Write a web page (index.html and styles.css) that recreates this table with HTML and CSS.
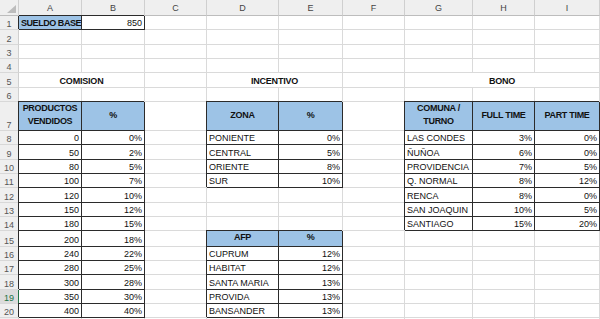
FILE: index.html
```html
<!DOCTYPE html>
<html lang="es">
<head>
    <meta charset="UTF-8">
    <meta name="viewport" content="width=device-width, initial-scale=1.0">
    <title>Remuneraciones</title>
    <link rel="stylesheet" href="styles.css">
</head>
<body>
    <table class="sheet">
        <colgroup>
            <col class="c-rh">
            <col class="c-a">
            <col class="c-b">
            <col class="c-c">
            <col class="c-d">
            <col class="c-e">
            <col class="c-f">
            <col class="c-g">
            <col class="c-h">
            <col class="c-i">
        </colgroup>
        <thead>
            <tr class="colhead">
                <th class="corner"></th>
                <th>A</th><th>B</th><th>C</th><th>D</th><th>E</th><th>F</th><th>G</th><th>H</th><th>I</th>
            </tr>
        </thead>
        <tbody>
            <tr>
                <th>1</th>
                <td class="bx fill b">SUELDO BASE</td><td class="bx num">850</td>
                <td></td><td></td><td></td><td></td><td></td><td></td><td></td>
            </tr>
            <tr><th>2</th><td></td><td></td><td></td><td></td><td></td><td></td><td></td><td></td><td></td></tr>
            <tr><th>3</th><td></td><td></td><td></td><td></td><td></td><td></td><td></td><td></td><td></td></tr>
            <tr><th>4</th><td></td><td></td><td></td><td></td><td></td><td></td><td></td><td></td><td></td></tr>
            <tr>
                <th>5</th>
                <td colspan="2" class="title">COMISION</td><td></td>
                <td colspan="2" class="title">INCENTIVO</td><td></td>
                <td colspan="3" class="title">BONO</td>
            </tr>
            <tr><th>6</th><td></td><td></td><td></td><td></td><td></td><td></td><td></td><td></td><td></td></tr>
            <tr class="tall">
                <th>7</th>
                <td class="bx fill hd">PRODUCTOS<br>VENDIDOS</td><td class="bx fill hd">%</td>
                <td></td>
                <td class="bx fill hd">ZONA</td><td class="bx fill hd">%</td>
                <td></td>
                <td class="bx fill hd">COMUNA /<br>TURNO</td><td class="bx fill hd">FULL TIME</td><td class="bx fill hd">PART TIME</td>
            </tr>
            <tr>
                <th>8</th>
                <td class="bx num">0</td><td class="bx num">0%</td><td></td>
                <td class="bx">PONIENTE</td><td class="bx num">0%</td><td></td>
                <td class="bx">LAS CONDES</td><td class="bx num">3%</td><td class="bx num">0%</td>
            </tr>
            <tr>
                <th>9</th>
                <td class="bx num">50</td><td class="bx num">2%</td><td></td>
                <td class="bx">CENTRAL</td><td class="bx num">5%</td><td></td>
                <td class="bx">ÑUÑOA</td><td class="bx num">6%</td><td class="bx num">0%</td>
            </tr>
            <tr>
                <th>10</th>
                <td class="bx num">80</td><td class="bx num">5%</td><td></td>
                <td class="bx">ORIENTE</td><td class="bx num">8%</td><td></td>
                <td class="bx">PROVIDENCIA</td><td class="bx num">7%</td><td class="bx num">5%</td>
            </tr>
            <tr>
                <th>11</th>
                <td class="bx num">100</td><td class="bx num">7%</td><td></td>
                <td class="bx">SUR</td><td class="bx num">10%</td><td></td>
                <td class="bx">Q. NORMAL</td><td class="bx num">8%</td><td class="bx num">12%</td>
            </tr>
            <tr>
                <th>12</th>
                <td class="bx num">120</td><td class="bx num">10%</td><td></td>
                <td></td><td></td><td></td>
                <td class="bx">RENCA</td><td class="bx num">8%</td><td class="bx num">0%</td>
            </tr>
            <tr>
                <th>13</th>
                <td class="bx num">150</td><td class="bx num">12%</td><td></td>
                <td></td><td></td><td></td>
                <td class="bx">SAN JOAQUIN</td><td class="bx num">10%</td><td class="bx num">5%</td>
            </tr>
            <tr>
                <th>14</th>
                <td class="bx num">180</td><td class="bx num">15%</td><td></td>
                <td></td><td></td><td></td>
                <td class="bx">SANTIAGO</td><td class="bx num">15%</td><td class="bx num">20%</td>
            </tr>
            <tr>
                <th>15</th>
                <td class="bx num">200</td><td class="bx num">18%</td><td></td>
                <td class="bx fill hd">AFP</td><td class="bx fill hd">%</td><td></td>
                <td></td><td></td><td></td>
            </tr>
            <tr>
                <th>16</th>
                <td class="bx num">240</td><td class="bx num">22%</td><td></td>
                <td class="bx">CUPRUM</td><td class="bx num">12%</td><td></td>
                <td></td><td></td><td></td>
            </tr>
            <tr>
                <th>17</th>
                <td class="bx num">280</td><td class="bx num">25%</td><td></td>
                <td class="bx">HABITAT</td><td class="bx num">12%</td><td></td>
                <td></td><td></td><td></td>
            </tr>
            <tr>
                <th>18</th>
                <td class="bx num">300</td><td class="bx num">28%</td><td></td>
                <td class="bx">SANTA MARIA</td><td class="bx num">13%</td><td></td>
                <td></td><td></td><td></td>
            </tr>
            <tr class="sel">
                <th>19</th>
                <td class="bx num act">350</td><td class="bx num">30%</td><td></td>
                <td class="bx">PROVIDA</td><td class="bx num">13%</td><td></td>
                <td></td><td></td><td></td>
            </tr>
            <tr>
                <th>20</th>
                <td class="bx num">400</td><td class="bx num">40%</td><td></td>
                <td class="bx">BANSANDER</td><td class="bx num">13%</td><td></td>
                <td></td><td></td><td></td>
            </tr>
            <tr><th></th><td></td><td></td><td></td><td></td><td></td><td></td><td></td><td></td><td></td></tr>
        </tbody>
    </table>
</body>
</html>
```
FILE: styles.css
```css
body {
    margin: 0;
    background-color: #fff;
    overflow: hidden;
    font-family: "Liberation Sans", Arial, sans-serif;
    font-size: 9px;
    color: #111;
}

.sheet {
    table-layout: fixed;
    border-collapse: separate;
    border-spacing: 0;
    width: 600px;
}

.c-rh { width: 19px; }
.c-a { width: 63px; }
.c-b { width: 63px; }
.c-c { width: 62px; }
.c-d { width: 72px; }
.c-e { width: 64px; }
.c-f { width: 62px; }
.c-g { width: 68px; }
.c-h { width: 62px; }
.c-i { width: 65px; }

.sheet tr {
    height: 14.33px;
}
.sheet tr.tall {
    height: 28px;
}

.sheet td {
    padding: 0 2px 1px;
    border-right: 1px solid #dadada;
    border-bottom: 1px solid #dadada;
    vertical-align: bottom;
    white-space: nowrap;
    overflow: hidden;
}

/* row and column headers */
.sheet th {
    padding: 0;
    font-weight: normal;
    color: #555;
    background-color: #efefef;
    border-right: 1px solid #cfcfcf;
    border-bottom: 1px solid #d8d8d8;
    text-align: center;
    vertical-align: bottom;
    font-size: 9px;
}
.sheet .colhead {
    height: 16px;
}
.sheet .colhead th {
    vertical-align: middle;
    border-bottom-color: #bdbdbd;
    color: #444;
}
.corner {
    position: relative;
}
.corner::after {
    content: "";
    position: absolute;
    right: 2px;
    bottom: 2px;
    border-style: solid;
    border-width: 0 0 8px 9px;
    border-color: transparent transparent #bcbcbc transparent;
}

.sel th {
    color: #217346;
    background-color: #dcdcdc;
}

/* boxed table cells */
.sheet td.bx {
    border-right-color: #2b2b2b;
    border-bottom-color: #2b2b2b;
    box-shadow: -1px -1px 0 #2b2b2b;
}
.sheet td.act {
    box-shadow: -1px 0 0 #217346, 0 -1px 0 #2b2b2b;
}
.fill {
    background-color: #9dc3e6;
}
.b {
    font-weight: bold;
    letter-spacing: -0.45px;
    padding-left: 1px;
}
.hd {
    font-weight: bold;
    letter-spacing: -0.3px;
    text-align: center;
    vertical-align: middle !important;
    line-height: 13.5px;
}
.num {
    text-align: right;
}
.title {
    font-weight: bold;
    letter-spacing: -0.2px;
    text-align: center;
}
```
